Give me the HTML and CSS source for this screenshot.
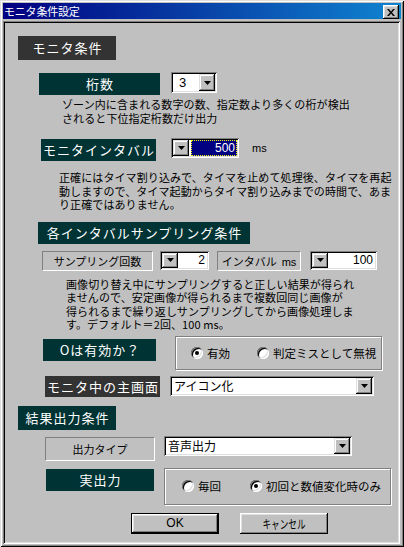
FILE: index.html
```html
<!DOCTYPE html>
<html lang="ja">
<head>
  <meta charset="UTF-8">
  <title>モニタ条件設定</title>
  <link rel="stylesheet" href="styles.css">
</head>
<body>
  <div class="window">
    <div class="titlebar">
      <span class="title">モニタ条件設定</span>
      <span class="close-btn">
        <svg width="8" height="7" viewBox="0 0 8 7"><path d="M0 0h2l2 2.5L6 0h2L5 3.5 8 7H6L4 4.5 2 7H0l3-3.5z" fill="#000"/></svg>
      </span>
    </div>

    <div class="client">
      <div class="row row-sec1">
        <div class="tag dark sec-head">モニタ条件</div>
      </div>

      <div class="row row-digits">
        <div class="tag lbl-digits">桁数</div>
        <div class="field sel-digits">
          <span class="value num">3</span>
          <span class="arrow-btn"><svg width="7" height="4" viewBox="0 0 7 4"><path d="M0 0h7L3.5 4z" fill="#000"/></svg></span>
        </div>
      </div>
      <div class="note note-digits">
        ゾーン内に含まれる数字の数、指定数より多くの桁が検出<br>
        されると下位指定桁数だけ出力
      </div>

      <div class="row row-interval">
        <div class="tag lbl-interval">モニタインタバル</div>
        <div class="field spin-interval">
          <span class="arrow-btn"><svg width="7" height="4" viewBox="0 0 7 4"><path d="M0 0h7L3.5 4z" fill="#000"/></svg></span>
          <span class="value num focused">500</span>
        </div>
        <span class="unit">ms</span>
      </div>
      <div class="note note-interval">
        正確にはタイマ割り込みで、タイマを止めて処理後、タイマを再起<br>
        動しますので、タイマ起動からタイマ割り込みまでの時間で、あま<br>
        り正確ではありません。
      </div>

      <div class="row row-sampling-head">
        <div class="tag lbl-sampling">各インタバルサンプリング条件</div>
      </div>
      <div class="row row-sampling">
        <div class="static st-count">サンプリング回数</div>
        <div class="field spin-count">
          <span class="arrow-btn"><svg width="7" height="4" viewBox="0 0 7 4"><path d="M0 0h7L3.5 4z" fill="#000"/></svg></span>
          <span class="value num">2</span>
        </div>
        <div class="static st-ms">インタバル&nbsp;&nbsp;<span class="num">ms</span></div>
        <div class="field spin-ms">
          <span class="arrow-btn"><svg width="7" height="4" viewBox="0 0 7 4"><path d="M0 0h7L3.5 4z" fill="#000"/></svg></span>
          <span class="value num">100</span>
        </div>
      </div>
      <div class="note note-sampling">
        画像切り替え中にサンプリングすると正しい結果が得られ<br>
        ませんので、安定画像が得られるまで複数回同じ画像が<br>
        得られるまで繰り返しサンプリングしてから画像処理しま<br>
        す。デフォルト＝2回、100 ms。
      </div>

      <div class="row row-valid">
        <div class="tag lbl-valid">Oは有効か？</div>
        <div class="group grp-valid">
          <label class="opt"><span class="radio checked"></span>有効</label>
          <label class="opt opt-second"><span class="radio"></span>判定ミスとして無視</label>
        </div>
      </div>

      <div class="row row-main">
        <div class="tag dark lbl-main">モニタ中の主画面</div>
        <div class="field combo combo-main">
          <span class="value">アイコン化</span>
          <span class="arrow-btn"><svg width="7" height="4" viewBox="0 0 7 4"><path d="M0 0h7L3.5 4z" fill="#000"/></svg></span>
        </div>
      </div>

      <div class="row row-sec2">
        <div class="tag sec-head">結果出力条件</div>
      </div>

      <div class="row row-type">
        <div class="static st-type">出力タイプ</div>
        <div class="field combo combo-type">
          <span class="value">音声出力</span>
          <span class="arrow-btn"><svg width="7" height="4" viewBox="0 0 7 4"><path d="M0 0h7L3.5 4z" fill="#000"/></svg></span>
        </div>
      </div>

      <div class="row row-output">
        <div class="tag lbl-output">実出力</div>
        <div class="group grp-output">
          <label class="opt"><span class="radio"></span>毎回</label>
          <label class="opt opt-second"><span class="radio checked"></span>初回と数値変化時のみ</label>
        </div>
      </div>

      <div class="row row-buttons">
        <div class="btn btn-default num">OK</div>
        <div class="btn btn-cancel"><span class="narrow">キャンセル</span></div>
      </div>
    </div>
  </div>
</body>
</html>
```

FILE: styles.css
```css
* {
  box-sizing: border-box;
}

body {
  margin: 0;
  background: #c0c0c0;
  font-family: "Noto Sans CJK JP", sans-serif;
  color: #000;
}

.num {
  font-family: "Liberation Sans", "Noto Sans CJK JP", sans-serif;
}

/* window frame */
.window {
  width: 404px;
  height: 547px;
  padding: 3px;
  background: #c0c0c0;
  box-shadow: inset 1px 1px #dfdfdf, inset -1px -1px #000, inset 2px 2px #fff, inset -2px -2px #808080;
}

.titlebar {
  height: 16px;
  margin-bottom: 2px;
  padding-left: 1px;
  display: flex;
  justify-content: space-between;
  background: linear-gradient(to right, #000080, #1084d0);
  color: #fff;
}

.title {
  font-size: 11px;
  line-height: 16px;
  letter-spacing: -0.2px;
}

.close-btn {
  width: 16px;
  height: 14px;
  margin: 2px 2px 0 0;
  display: flex;
  align-items: center;
  justify-content: center;
  background: #c0c0c0;
  box-shadow: inset -1px -1px #000, inset 1px 1px #fff, inset -2px -2px #808080, inset 2px 2px #dfdfdf;
}

.client {
  width: 397px;
  height: 523px;
  padding: 2px;
  box-shadow: inset 1px 1px #808080, inset -1px -1px #fff, inset 2px 2px #000, inset -2px -2px #dfdfdf;
}

.row {
  display: flex;
  align-items: flex-start;
}

/* dark labels */
.tag {
  flex: none;
  padding-left: 1px;
  background: #003333;
  color: #fff;
  font-size: 13px;
  letter-spacing: 1px;
  text-align: center;
}

.tag.dark {
  background: #333333;
}

.sec-head {
  width: 98px;
  height: 24px;
  line-height: 24px;
  margin-left: 13px;
}

/* sunken static text */
.static {
  flex: none;
  height: 20px;
  line-height: 18px;
  border: 1px solid;
  border-color: #808080 #fff #fff #808080;
  font-size: 11px;
  text-align: center;
}

.note {
  font-size: 11px;
  line-height: 13.5px;
  letter-spacing: 0.1px;
}

/* sunken edit / combo */
.field {
  flex: none;
  display: flex;
  padding: 2px;
  background: #fff;
  box-shadow: inset 1px 1px #808080, inset -1px -1px #fff, inset 2px 2px #000, inset -2px -2px #dfdfdf;
}

.field .value {
  flex: 1;
  font-size: 12px;
}

.arrow-btn {
  flex: none;
  width: 16px;
  display: flex;
  align-items: center;
  justify-content: center;
  background: #c0c0c0;
  box-shadow: inset -1px -1px #000, inset 1px 1px #dfdfdf, inset -2px -2px #808080, inset 2px 2px #fff;
}

.combo .value {
  padding-left: 2px;
  line-height: 16px;
}

/* radio groups */
.group {
  flex: none;
  display: flex;
  align-items: center;
  border: 1px solid #808080;
  box-shadow: inset 1px 1px #fff, 1px 1px #fff;
}

.opt {
  display: flex;
  align-items: center;
  gap: 4px;
  font-size: 11.5px;
}

.radio {
  position: relative;
  width: 12px;
  height: 12px;
  border-radius: 50%;
  background: #fff;
  box-shadow: inset 1px 1px #808080, inset -1px -1px #fff, inset 2px 2px #000, inset -2px -2px #dfdfdf;
}

.radio.checked::after {
  content: "";
  position: absolute;
  left: 4px;
  top: 4px;
  width: 4px;
  height: 4px;
  border-radius: 50%;
  background: #000;
}

/* buttons */
.btn {
  flex: none;
  width: 88px;
  height: 21px;
  background: #c0c0c0;
  box-shadow: inset -1px -1px #000, inset 1px 1px #fff, inset -2px -2px #808080, inset 2px 2px #dfdfdf;
  font-size: 12px;
  line-height: 21px;
  text-align: center;
}

.btn-default {
  border: 1px solid #000;
  line-height: 19px;
}

.narrow {
  display: inline-block;
  transform: scaleX(0.72);
}

/* rows */
.row-sec1 {
  margin-top: 13px;
}

.row-digits {
  margin-top: 12px;
}

.lbl-digits {
  width: 121px;
  height: 22px;
  line-height: 22px;
  margin: 1px 0 0 34px;
}

.sel-digits {
  width: 46px;
  height: 21px;
  margin-left: 11px;
}

.sel-digits .value {
  padding-left: 6px;
  line-height: 17px;
  font-size: 13px;
}

.note-digits {
  margin: 3px 0 0 57px;
}

.row-interval {
  margin-top: 13px;
}

.lbl-interval {
  width: 115px;
  height: 22px;
  line-height: 22px;
  margin: 1px 0 0 36px;
}

.spin-interval {
  width: 68px;
  height: 20px;
  margin-left: 15px;
}

.value.focused {
  margin-left: 2px;
  padding-right: 1px;
  border: 1px dotted #ffff00;
  background: #000080;
  color: #fff;
  text-align: right;
  line-height: 14px;
}

.unit {
  margin-left: 13px;
  font-family: "Liberation Sans", sans-serif;
  font-size: 11px;
  line-height: 20px;
}

.note-interval {
  margin: 10px 0 0 54px;
}

.row-sampling-head {
  margin-top: 10px;
}

.lbl-sampling {
  width: 212px;
  height: 22px;
  line-height: 22px;
  margin-left: 33px;
}

.row-sampling {
  margin-top: 7px;
}

.st-count {
  width: 111px;
  margin-left: 37px;
}

.spin-count {
  width: 49px;
  height: 19px;
  margin-left: 7px;
}

.spin-count .value,
.spin-ms .value {
  padding-right: 2px;
  text-align: right;
  line-height: 15px;
}

.st-ms {
  width: 84px;
  margin-left: 8px;
}

.spin-ms {
  width: 67px;
  height: 19px;
  margin-left: 9px;
}

.note-sampling {
  margin: 7px 0 0 61px;
}

.row-valid {
  margin-top: 4px;
}

.lbl-valid {
  width: 113px;
  height: 22px;
  line-height: 22px;
  margin: 3px 0 0 38px;
}

.grp-valid {
  width: 207px;
  height: 34px;
  margin-left: 19px;
  padding-left: 15px;
}

.grp-valid .opt-second {
  margin-left: 27px;
}

.row-main {
  margin-top: 6px;
}

.lbl-main {
  width: 115px;
  height: 21px;
  line-height: 21px;
  margin-left: 40px;
}

.combo-main {
  width: 204px;
  height: 20px;
  margin-left: 10px;
}

.row-sec2 {
  margin-top: 9px;
}

.row-type {
  margin-top: 6px;
}

.st-type {
  width: 110px;
  height: 24px;
  line-height: 22px;
  margin: 1px 0 0 40px;
}

.combo-type {
  width: 188px;
  height: 20px;
  margin-left: 9px;
}

.row-output {
  margin-top: 7px;
}

.lbl-output {
  width: 108px;
  height: 22px;
  line-height: 22px;
  margin: 1px 0 0 41px;
}

.grp-output {
  width: 227px;
  height: 37px;
  margin-left: 10px;
  padding-left: 17px;
}

.grp-output .opt-second {
  margin-left: 29px;
}

.row-buttons {
  margin-top: 8px;
}

.btn-default {
  margin-left: 126px;
}

.btn-cancel {
  margin-left: 21px;
}
```
